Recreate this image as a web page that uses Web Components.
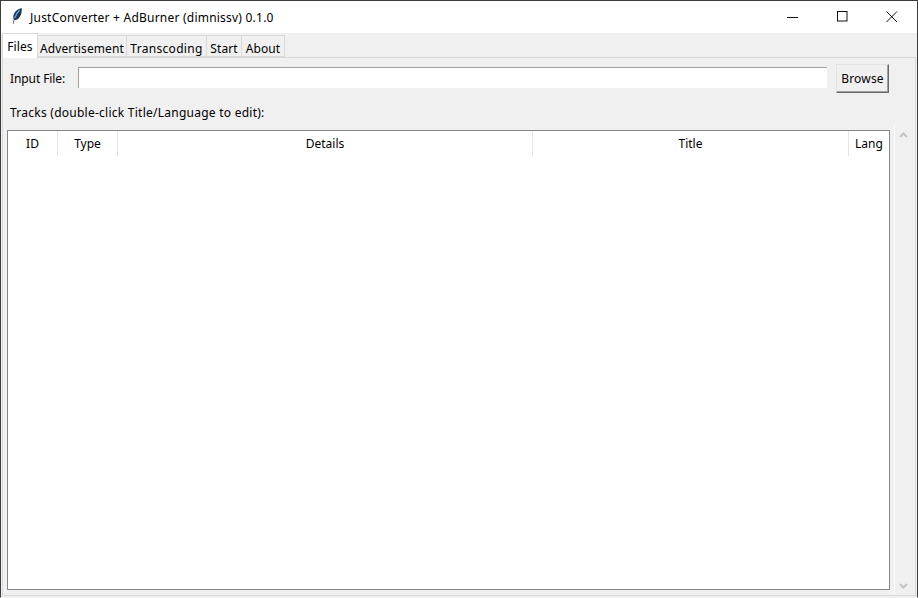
<!DOCTYPE html>
<html>
<head>
<meta charset="utf-8">
<title>JustConverter + AdBurner</title>
<style>
  html, body { margin: 0; padding: 0; height: 100%; overflow: hidden; background: #f0f0f0; }
  body { font: 12px "Noto Sans", "Open Sans", sans-serif; color: #000; }
</style>
</head>
<body>
<app-window>
  <title-bar slot="title">JustConverter + AdBurner (dimnissv) 0.1.0</title-bar>
  <tab-bar slot="tabs">
    <tab-item selected>Files</tab-item>
    <tab-item style="width:89px">Advertisement</tab-item>
    <tab-item style="width:80px;letter-spacing:.3px">Transcoding</tab-item>
    <tab-item style="width:35px">Start</tab-item>
    <tab-item style="width:43px">About</tab-item>
  </tab-bar>
  <files-pane></files-pane>
</app-window>

<script>
class AppWindow extends HTMLElement {
  constructor() {
    super();
    this.attachShadow({ mode: 'open' }).innerHTML = `
      <style>
        :host { display: flex; flex-direction: column; box-sizing: border-box; width: 918px; height: 598px;
                border: 1px solid #3c3c3c; border-bottom-color: #f0f0f0; background: #f0f0f0; }
      </style>
      <slot name="title"></slot>
      <slot name="tabs"></slot>
      <slot></slot>`;
  }
}

class TitleBar extends HTMLElement {
  constructor() {
    super();
    this.attachShadow({ mode: 'open' }).innerHTML = `
      <style>
        :host { display: flex; align-items: center; height: 32px; background: #fff; flex: none; }
        .icon { width: 10px; height: 16px; margin: 0 8px 3px 11px; flex: none; }
        .text { flex: 1; white-space: nowrap; letter-spacing: .22px; margin-top: 1px; }
        .btn { width: 50px; height: 32px; display: flex; align-items: center; justify-content: center; }
        svg { display: block; }
      </style>
      <svg class="icon" viewBox="0 0 10 16">
        <path d="M1 15.8 C1.2 14 1.4 12.6 1.7 11.4 C.2 7.4 3 1.8 9.6 0 C10.2 3.6 9.2 8.4 6 11 C4.6 12 3.2 12.2 2.4 11.7 C2.1 13 1.8 14.2 1.6 15.8 Z" fill="#1b3558"/>
        <path d="M7.6 2.2 C5.2 4.4 3.6 7 2.8 10" stroke="#78aee0" stroke-width="1.2" fill="none"/>
      </svg>
      <span class="text"><slot></slot></span>
      <div class="btn"><svg width="12" height="12"><path d="M1 6.5H12" stroke="#111" stroke-width="1"/></svg></div>
      <div class="btn"><svg width="12" height="12"><rect x="1.5" y=".5" width="9.5" height="9.5" fill="none" stroke="#111"/></svg></div>
      <div class="btn"><svg width="12" height="12"><path d="M.5 .5L11 11M11 .5L.5 11" stroke="#111" stroke-width="1" fill="none"/></svg></div>`;
  }
}

class TabBar extends HTMLElement {
  constructor() {
    super();
    this.attachShadow({ mode: 'open' }).innerHTML = `
      <style>
        :host { display: flex; align-items: flex-end; height: 24px; padding-left: 1px; flex: none; position: relative; z-index: 1; }
      </style>
      <slot></slot>`;
  }
}

class TabItem extends HTMLElement {
  constructor() {
    super();
    this.attachShadow({ mode: 'open' }).innerHTML = `
      <style>
        :host { display: flex; align-items: center; justify-content: center; box-sizing: border-box; height: 22px; padding-top: 4px;
                border: 1px solid #d9d9d9; border-left: 0; white-space: nowrap; background: #f0f0f0; overflow: hidden; letter-spacing: .1px; }
        :host([selected]) { width: 36px; height: 25px; margin-bottom: -1px; background: #fff; border-left: 1px solid #d9d9d9;
                border-bottom: 0; padding-top: 1px; }
      </style>
      <slot></slot>`;
  }
}

class FilesPane extends HTMLElement {
  constructor() {
    super();
    this.attachShadow({ mode: 'open' }).innerHTML = `
      <style>
        :host { display: flex; flex-direction: column; flex: 1; min-height: 0; margin: 0 1px 1px; box-sizing: border-box;
                border: 1px solid #d9d9d9; padding: 6px 4px 5px 4px; }
        .row { display: flex; align-items: center; height: 28px; padding-left: 3px; flex: none; }
        .name { width: 56px; letter-spacing: -.1px; white-space: nowrap; }
        .input { flex: none; width: 749px; height: 21px; box-sizing: border-box; margin: 0 10px 1px 12px; background: #fff;
                 border-top: 1px solid #a0a0a0; border-left: 1px solid #a0a0a0; }
        .btn { flex: none; width: 53px; height: 29px; margin-left: -1px; box-sizing: border-box; display: flex; align-items: center; justify-content: center;
               background: #f0f0f0; border: 1px solid; border-color: #e3e3e3 #696969 #696969 #e3e3e3; box-shadow: inset -1px -1px 0 #a0a0a0; letter-spacing: .2px; }
        .label { padding: 13px 0 9px 3px; line-height: 16px; flex: none; letter-spacing: .25px; }
        .tree-row { display: flex; flex: 1; min-height: 0; }
      </style>
      <div class="row"><span class="name">Input File:</span><div class="input"></div><div class="btn">Browse</div></div>
      <div class="label">Tracks (double-click Title/Language to edit):</div>
      <div class="tree-row">
        <track-table></track-table>
        <scroll-bar></scroll-bar>
      </div>`;
  }
}

class TrackTable extends HTMLElement {
  constructor() {
    super();
    const cols = [['ID', 50], ['Type', 60], ['Details', 415], ['Title', 316], ['Lang', 40]];
    this.attachShadow({ mode: 'open' }).innerHTML = `
      <style>
        :host { display: block; box-sizing: border-box; width: 884px; background: #fff; border: 1px solid #828790; }
        .head { display: flex; height: 25px; }
        .col { box-sizing: border-box; display: flex; align-items: center; justify-content: center;
               border-right: 1px solid #e5e5e5; }
        .col:last-child { border-right: 0; }
      </style>
      <div class="head">${cols.map(c => `<div class="col" style="width:${c[1]}px">${c[0]}</div>`).join('')}</div>`;
  }
}

class ScrollBar extends HTMLElement {
  constructor() {
    super();
    this.attachShadow({ mode: 'open' }).innerHTML = `
      <style>
        :host { display: flex; flex-direction: column; justify-content: space-between; align-items: center; box-sizing: border-box;
                width: 19px; margin: -5px 0 -4px 4px; padding: 6px 0 4px; border-left: 1px solid #fff; }
        svg { display: block; }
      </style>
      <svg width="9" height="8"><path d="M1 6L4.5 2.5L8 6" stroke="#c4c4c4" stroke-width="2" fill="none"/></svg>
      <svg width="9" height="8"><path d="M1 2L4.5 5.5L8 2" stroke="#c4c4c4" stroke-width="2" fill="none"/></svg>`;
  }
}

customElements.define('app-window', AppWindow);
customElements.define('title-bar', TitleBar);
customElements.define('tab-bar', TabBar);
customElements.define('tab-item', TabItem);
customElements.define('files-pane', FilesPane);
customElements.define('track-table', TrackTable);
customElements.define('scroll-bar', ScrollBar);
</script>
</body>
</html>
